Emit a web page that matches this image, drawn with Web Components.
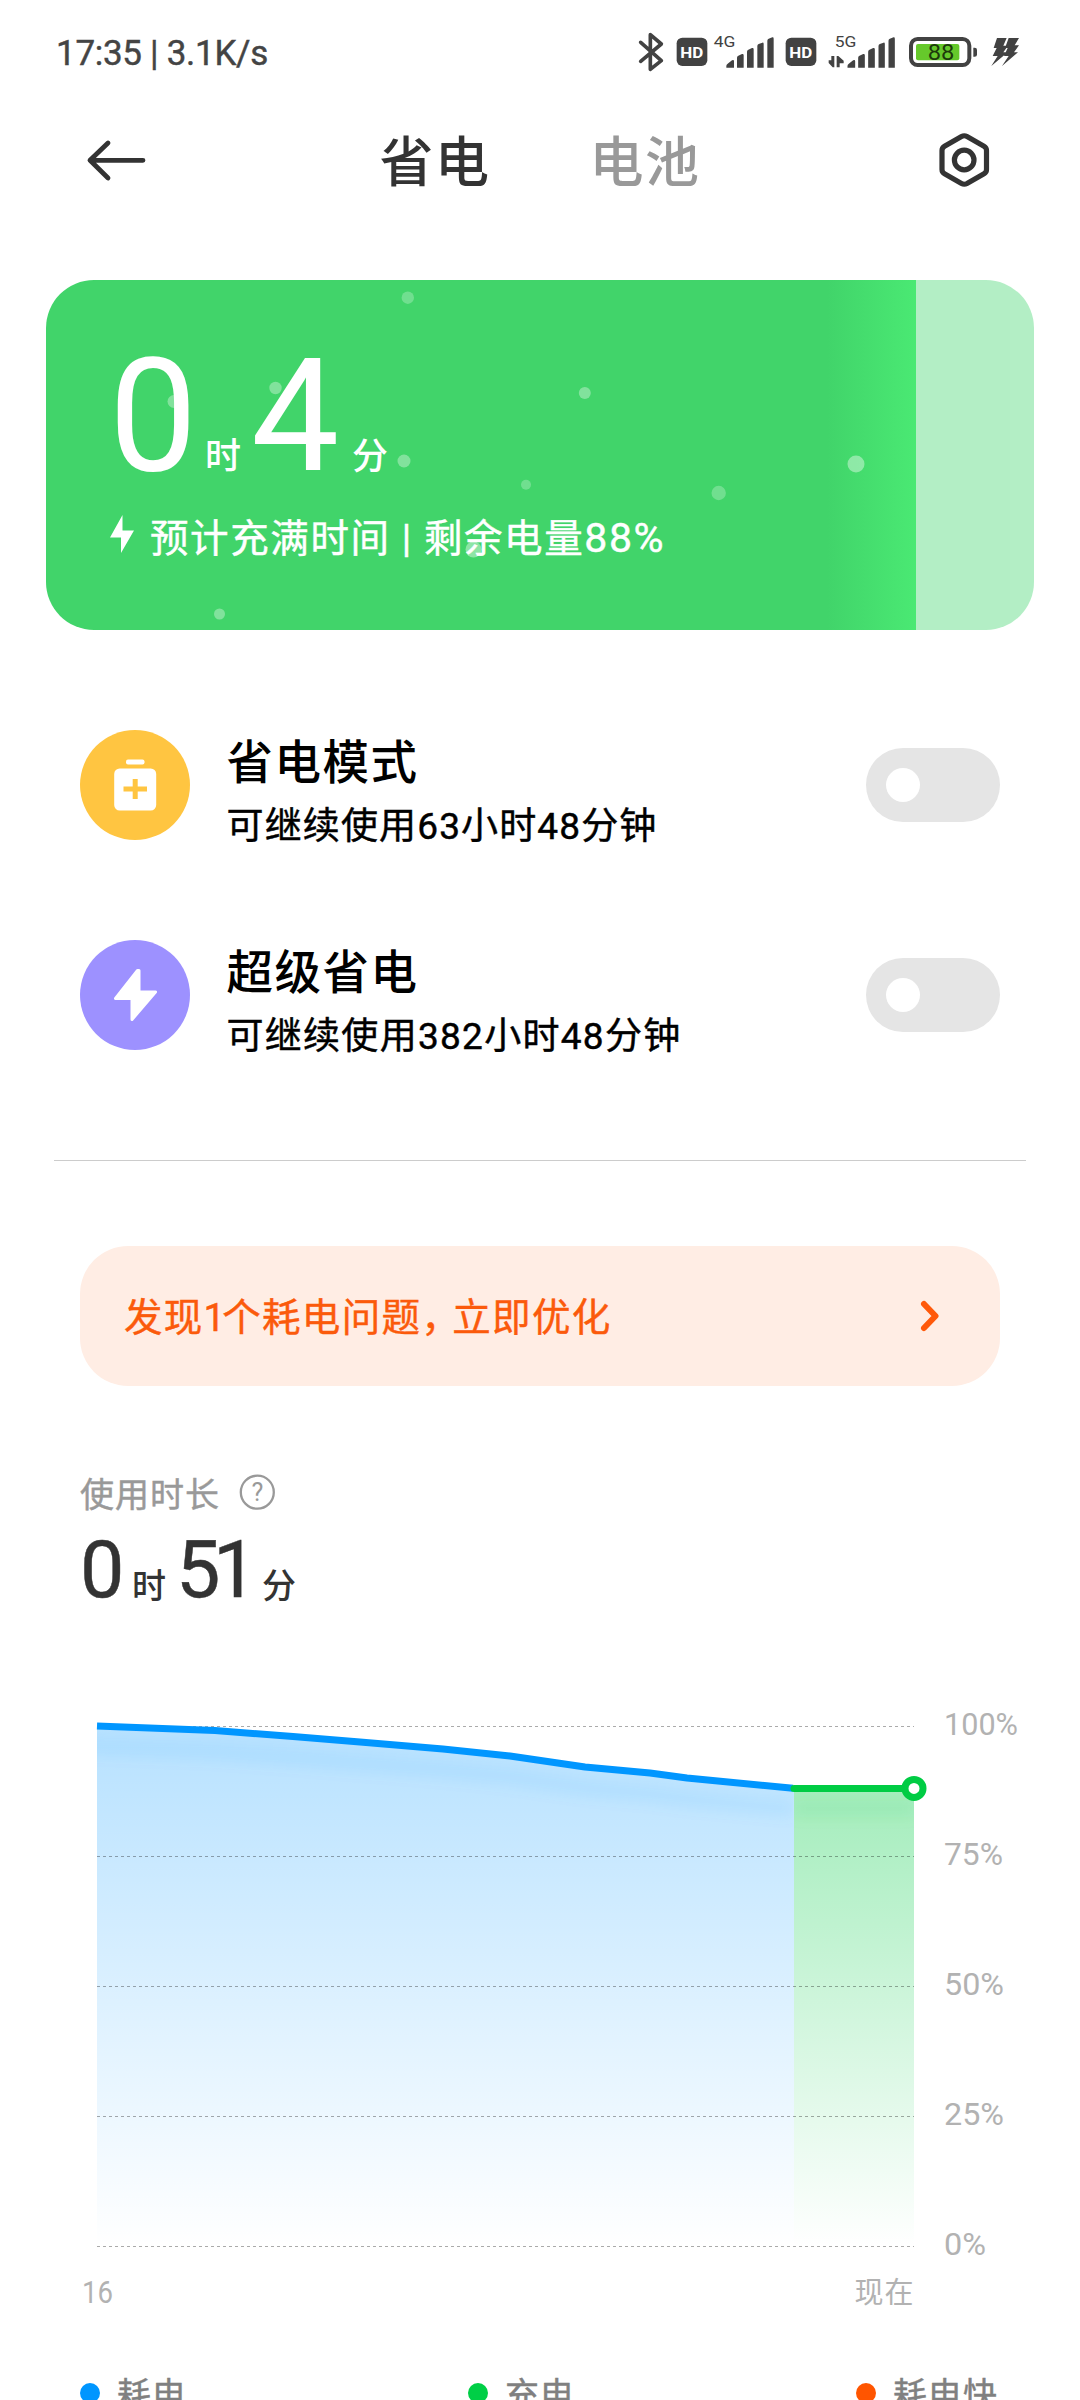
<!DOCTYPE html>
<html lang="zh-CN">
<head>
<meta charset="utf-8">
<title>省电</title>
<style>
html,body{margin:0;padding:0;background:#fff}
body{width:1080px;height:2400px;overflow:hidden;font-family:Roboto,"Noto Sans CJK SC",sans-serif}
</style>
</head>
<body>
<battery-page></battery-page>
<script>
const measure = document.createElement('canvas').getContext('2d');
const FAMILY = 'Roboto,"Noto Sans CJK SC",sans-serif';

function component(name, html, setup) {
  const tpl = document.createElement('template');
  tpl.innerHTML = html;
  customElements.define(name, class extends HTMLElement {
    constructor() {
      super();
      this.attachShadow({ mode: 'open' }).append(tpl.content.cloneNode(true));
    }
    connectedCallback() { if (setup) setup(this, this.shadowRoot); }
  });
}

/* One line of text; "w" spreads the letters over a given advance width. */
component('fit-text', `<style>:host{display:block;white-space:pre;line-height:1;flex:none}:host([firm]){-webkit-text-stroke:.45px currentColor}</style><slot></slot>`, el => {
  const size = +el.getAttribute('size'), weight = el.getAttribute('weight') || 400, w = el.getAttribute('w');
  el.style.fontSize = size + 'px';
  el.style.height = size + 'px';
  el.style.fontWeight = weight;
  if (w) {
    const s = el.textContent;
    measure.font = `${weight} ${size}px ${FAMILY}`;
    el.style.letterSpacing = ((w - measure.measureText(s).width) / [...s].length).toFixed(3) + 'px';
    el.style.width = w + 'px';
  }
});

component('status-bar', `<style>
:host{display:flex;justify-content:space-between;height:100px;padding:0 40px 0 56px;box-sizing:border-box;color:#444}
fit-text{margin-top:36px}
svg{margin-top:20px;font-family:Roboto,sans-serif}
</style>
<fit-text firm size="35" w="212">17:35 | 3.1K/s</fit-text>
<svg width="420" height="70" viewBox="0 0 1260 210" fill="#424242">
  <path d="M62 67L124 122L91 148V44L124 72L62 124" fill="none" stroke="#424242" stroke-width="11" stroke-linejoin="round" stroke-linecap="round"/>
  <rect x="170" y="53" width="92" height="85" rx="17"/>
  <text x="181" y="113" font-size="46" font-weight="700" fill="#fff" textLength="69" lengthAdjust="spacingAndGlyphs">HD</text>
  <text x="281" y="80" font-size="46" textLength="65" lengthAdjust="spacingAndGlyphs">4G</text>
  <path d="M319 143V138Q319 134 323 131L336 121Q342 118 342 124V143ZM351 143V113Q351 109 355 107L366 102Q371 101 371 106V143ZM381 143V95Q381 91 385 89L396 84Q401 83 401 88V143ZM412 143V78Q412 74 416 72L427 68Q431 67 431 72V143ZM442 143V62Q442 58 446 56L457 52Q461 51 461 56V143Z"/>
  <rect x="497" y="53" width="92" height="85" rx="17"/>
  <text x="508" y="113" font-size="46" font-weight="700" fill="#fff" textLength="69" lengthAdjust="spacingAndGlyphs">HD</text>
  <text x="644" y="80" font-size="46" textLength="65" lengthAdjust="spacingAndGlyphs">5G</text>
  <path d="M634 108H643V142H638L626 129V121H634ZM650 142V108H655L671 122V130H659V142Z"/>
  <path transform="translate(363.500 0)" d="M319 143V138Q319 134 323 131L336 121Q342 118 342 124V143ZM351 143V113Q351 109 355 107L366 102Q371 101 371 106V143ZM381 143V95Q381 91 385 89L396 84Q401 83 401 88V143ZM412 143V78Q412 74 416 72L427 68Q431 67 431 72V143ZM442 143V62Q442 58 446 56L457 52Q461 51 461 56V143Z"/>
  <rect x="873" y="57" width="175" height="78" rx="20" fill="none" stroke="#424242" stroke-width="12"/>
  <rect x="888" y="72" width="130" height="49" rx="6" fill="#66c92b"/>
  <text x="923" y="121" font-size="67" fill="#1d3b0b" textLength="80" lengthAdjust="spacingAndGlyphs">88</text>
  <path d="M1060 83H1064Q1071 83 1071 90V104Q1071 110 1064 110H1060Z"/>
  <path d="M1131 54H1160L1150 77H1164L1150 97H1163L1114 138L1133 108H1118L1130 84H1121ZM1166 54H1197L1184 76H1197L1182 97H1194L1146 138L1166 108H1152L1163 84H1155Z"/>
</svg>`);

component('tool-bar', `<style>
:host{display:flex;height:180px;box-sizing:border-box;color:#333}
.back{margin:36px 0 0 84px;flex:none}
.tabs{display:flex;gap:99px;margin:36.600px 0 0 229.500px}
.off{color:#999}
.set{margin:29px 0 0 233px;flex:none}
</style>
<svg class="back" width="66" height="48" viewBox="84 136 66 48" fill="none" stroke="#333" stroke-width="4.800" stroke-linecap="round" stroke-linejoin="round"><path d="M108 143L90 160.300L108 178M90 160.300H143"/></svg>
<div class="tabs"><fit-text size="54" weight="500" w="111">省电</fit-text><fit-text class="off" size="54" weight="500" w="111">电池</fit-text></div>
<svg class="set" width="60" height="62" viewBox="934 129 60 62" fill="none" stroke="#333" stroke-width="5.200" stroke-linejoin="round"><path d="M961.500 136.500Q964.200 135 967 136.500L984 146.200Q986.500 147.700 986.500 150.500V169.500Q986.500 172.300 984 173.800L967 183.500Q964.200 185 961.500 183.500L944.500 173.800Q942 172.300 942 169.500V150.500Q942 147.700 944.500 146.200Z"/><circle cx="964.200" cy="160" r="9.800"/></svg>`);

component('charge-card', `<style>
:host{display:grid;margin:0 46px;height:350px;border-radius:48px;overflow:hidden;color:#fff;background:linear-gradient(90deg,#41d46a 0 781px,#4ae973 870px,#b3eec5 870px)}
svg.dots,.body{grid-area:1/1}
.body{padding:57.900px 0 0 63px}
.time{display:flex;height:157px;align-items:flex-start}
.unit{margin-top:101.600px}
.sub{display:flex;margin-top:19px;align-items:flex-start}
.sub svg{margin:1px 16px 0 1px}
.sub fit-text{margin-top:4px;letter-spacing:1.600px}
.sub .num{font-size:41px;letter-spacing:1.600px}
</style>
<svg class="dots" width="988" height="350" viewBox="46 280 988 350" fill="#fff">
<g fill-opacity=".25"><circle cx="407.800" cy="297.700" r="6.200"/><circle cx="718.700" cy="493" r="7.200"/><circle cx="526" cy="484.700" r="5"/></g>
<g fill-opacity=".34"><circle cx="275.500" cy="388" r="6.200"/><circle cx="174" cy="401.500" r="6.500"/><circle cx="404" cy="461" r="6.500"/><circle cx="219.500" cy="614" r="5.500"/><circle cx="584.800" cy="393" r="6"/></g>
<g fill-opacity=".4"><circle cx="473.500" cy="549.500" r="8"/><circle cx="856" cy="464" r="8.500"/></g>
</svg>
<div class="body">
<div class="time"><fit-text size="157" w="96">0</fit-text><fit-text class="unit" size="36" weight="500" w="46">时</fit-text><fit-text size="157" w="101">4</fit-text><fit-text class="unit" size="36" weight="500">分</fit-text></div>
<div class="sub"><svg width="24" height="38" viewBox="0 0 24 38" fill="#fff"><path d="M12.500 0V15.500H24L11 38V22.500H0Z"/></svg><fit-text firm size="38.5">预计充满时间 | 剩余电量<span class="num">88%</span></fit-text></div>
</div>`);

component('toggle-switch', `<style>
:host{display:flex;align-items:center;width:134px;height:74px;border-radius:37px;background:#e5e5e5;box-sizing:border-box;padding-left:20px;flex:none}
i{width:34px;height:34px;border-radius:50%;background:#fff}
</style><i></i>`);

component('mode-row', `<style>
:host{display:flex;align-items:center;height:110px;margin:0 80px 100px;color:#000}
.text{flex:1;display:flex;flex-direction:column;margin-left:36.500px;height:100px;padding-top:9.600px;gap:21.500px}
</style><slot name="icon"></slot><div class="text"><slot></slot></div><toggle-switch></toggle-switch>`);

component('issue-banner', `<style>
:host{display:flex;justify-content:space-between;margin:0 80px;height:140px;border-radius:48px;background:#ffede4;color:#fb5a0b;box-sizing:border-box;padding:52.800px 58px 0 44px}
fit-text{letter-spacing:1.300px}
.one{letter-spacing:-3px}
.comma{letter-spacing:-7.500px}
svg{flex:none}
</style>
<fit-text firm size="38.5">发现<span class="one">1</span>个耗电问题<span class="comma">，</span>立即优化</fit-text>
<svg width="24" height="34" viewBox="0 0 24 34" fill="none" stroke="#ff590a" stroke-width="6" stroke-linecap="round" stroke-linejoin="round"><path d="M6 5L17.500 17L6 29"/></svg>`);

component('usage-time', `<style>
:host{display:block;height:222px;padding:92.400px 0 0 80px;box-sizing:border-box;color:#333}
.label{display:flex;color:#999;height:53px}
.label svg{margin:-5px 0 0 17px}
.time{display:flex}
.unit{margin-top:38px}
.minutes{margin-right:12px}
</style>
<div class="label"><fit-text firm size="34" w="140">使用时长</fit-text><svg width="40" height="40" viewBox="0 0 40 40"><circle cx="20.300" cy="19.200" r="16.500" fill="none" stroke="#999" stroke-width="2.300"/><text x="20.300" y="28" text-anchor="middle" font-size="25" fill="#999">?</text></svg></div>
<div class="time"><fit-text firm size="79" w="52">0</fit-text><fit-text class="unit" size="34" weight="500" w="44">时</fit-text><fit-text firm class="minutes" size="79" w="74">51</fit-text><fit-text class="unit" size="34" weight="500">分</fit-text></div>`);

component('level-chart', `<style>:host{display:block;height:720px;margin-top:42px}svg{display:block}</style>
<svg width="1080" height="720" viewBox="0 1650 1080 720">
<defs>
<linearGradient id="b" gradientUnits="userSpaceOnUse" x1="0" y1="1726" x2="0" y2="2246"><stop stop-color="#0096ff" stop-opacity=".285"/><stop offset="1" stop-color="#0096ff" stop-opacity="0"/></linearGradient>
<linearGradient id="g" gradientUnits="userSpaceOnUse" x1="0" y1="1788" x2="0" y2="2246"><stop stop-color="#00cc44" stop-opacity=".36"/><stop offset="1" stop-color="#00cc44" stop-opacity="0"/></linearGradient>
<filter id="f" filterUnits="userSpaceOnUse" x="60" y="1690" width="900" height="180"><feGaussianBlur stdDeviation="6.500"/></filter>
<clipPath id="cb"><path d="M97 1726L215 1730.500L293 1736.500L360 1742L443 1749L510 1756L585 1767L650 1773L687 1778L793 1788.300V2246H97Z"/></clipPath>
<clipPath id="cg"><path d="M794 1788H914V2246H794Z"/></clipPath>
</defs>
<path fill="url(#b)" d="M97 1726L215 1730.500L293 1736.500L360 1742L443 1749L510 1756L585 1767L650 1773L687 1778L794 1788.300V2246H97Z"/>
<path fill="url(#g)" d="M794 1788H914V2246H794Z"/>
<g clip-path="url(#cb)"><path transform="translate(0 21)" filter="url(#f)" fill="none" stroke="#0096ff" stroke-opacity=".065" stroke-width="17" d="M80 1725L215 1730.500L293 1736.500L360 1742L443 1749L510 1756L585 1767L650 1773L687 1778L793 1788.300"/></g>
<g clip-path="url(#cg)"><path transform="translate(0 21)" filter="url(#f)" stroke="#00cc44" stroke-opacity=".07" stroke-width="17" d="M794 1788L914 1788.100"/></g>
<path d="M97 1726.500H914M97 1856.500H914M97 1986.500H914M97 2116.500H914M97 2246.500H914" stroke="#000" stroke-opacity=".33" stroke-dasharray="3 3"/>
<path fill="none" stroke="#0096ff" stroke-width="7" stroke-linejoin="round" d="M97 1726L215 1730.500L293 1736.500L360 1742L443 1749L510 1756L585 1767L650 1773L687 1778L793 1788.300"/>
<path d="M794 1788.400H914" stroke="#00cc44" stroke-width="7" stroke-linecap="round"/>
<circle cx="914" cy="1788.400" r="9" fill="#fff" stroke="#00cc44" stroke-width="7"/>
<g font-size="30.500" fill="#b2b2b2">
<text x="944" y="1735" textLength="74" lengthAdjust="spacingAndGlyphs">100%</text><text x="944" y="1865" textLength="59" lengthAdjust="spacingAndGlyphs">75%</text><text x="944" y="1995" textLength="60" lengthAdjust="spacingAndGlyphs">50%</text><text x="944" y="2125" textLength="60" lengthAdjust="spacingAndGlyphs">25%</text><text x="944" y="2254.500" textLength="42" lengthAdjust="spacingAndGlyphs">0%</text>
<text x="82" y="2303" textLength="31" lengthAdjust="spacingAndGlyphs">16</text><text x="854.500" y="2303" font-size="29" textLength="59">现在</text>
</g>
</svg>`);

component('chart-legend', `<style>
:host{display:grid;grid-template-columns:388px 388px 1fr;padding:0 0 0 80px;color:#808080}
div{display:flex;gap:17px}
i{width:20px;height:20px;border-radius:50%;margin-top:13px}
fit-text{margin-top:8.400px}
</style>
<div><i style="background:#0096ff"></i><fit-text firm size="34" w="70">耗电</fit-text></div>
<div><i style="background:#00cf46"></i><fit-text firm size="34" w="70">充电</fit-text></div>
<div><i style="background:#ff5500"></i><fit-text firm size="34" w="105">耗电快</fit-text></div>`);

component('battery-page', `<style>
:host{display:block;width:1080px;height:2400px;overflow:hidden;background:#fff}
.modes{padding-top:100px}
mode-row svg{display:block}
hr{border:0;height:1px;background:#ccc;margin:110px 54px 85px}
</style>
<status-bar></status-bar>
<tool-bar></tool-bar>
<charge-card></charge-card>
<div class="modes">
<mode-row><svg slot="icon" width="110" height="110" viewBox="0 0 110 110"><circle cx="55" cy="55" r="55" fill="#ffc541"/><rect x="46" y="29.500" width="18.500" height="5" rx="2" fill="#fff"/><rect x="34.200" y="38.500" width="42" height="42" rx="5.500" fill="#fff"/><path d="M43.500 59H67M55.200 49V69" stroke="#ffc541" stroke-width="5"/></svg><fit-text size="46.5" weight="500" w="192">省电模式</fit-text><fit-text firm size="37" w="431">可继续使用63小时48分钟</fit-text></mode-row>
<mode-row><svg slot="icon" width="110" height="110" viewBox="0 0 110 110"><circle cx="55" cy="55" r="55" fill="#9d91ff"/><path d="M57.500 30.500L35.500 58.500H52V79.500L75.500 52H59V30.500Z" fill="#fff" stroke="#fff" stroke-width="3" stroke-linejoin="round"/></svg><fit-text size="46.5" weight="500" w="192">超级省电</fit-text><fit-text firm size="37" w="455">可继续使用382小时48分钟</fit-text></mode-row>
</div>
<hr>
<issue-banner></issue-banner>
<usage-time></usage-time>
<level-chart></level-chart>
<chart-legend></chart-legend>`);
</script>
</body>
</html>
